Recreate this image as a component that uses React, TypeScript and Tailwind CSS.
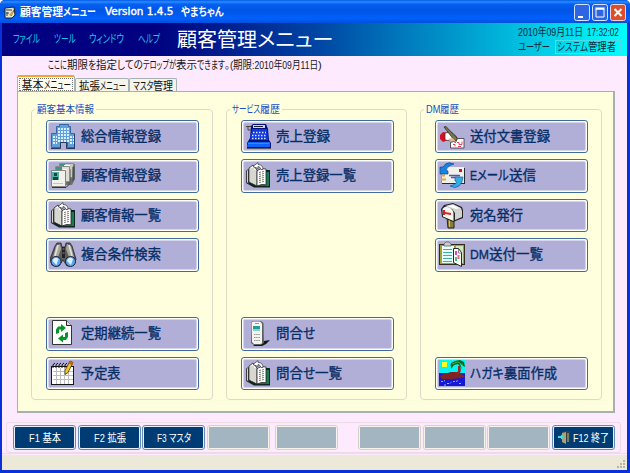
import { useLayoutEffect, useRef, useState, type ReactNode } from "react";

/* Text run squeezed or stretched horizontally to a fixed advance width. */
function T({ w, children, className = "" }: { w: number; children: string; className?: string }) {
  const ref = useRef<HTMLSpanElement>(null);
  const [scale, setScale] = useState(1);
  useLayoutEffect(() => {
    if (ref.current) setScale(w / ref.current.offsetWidth);
  }, [w, children]);
  return (
    <span className={`inline-block shrink-0 whitespace-pre ${className}`} style={{ width: w }}>
      <span ref={ref} className="inline-block origin-left [font-feature-settings:'palt']" style={{ transform: `scaleX(${scale})` }}>
        {children}
      </span>
    </span>
  );
}

function Icon({ children }: { children: ReactNode }) {
  return (
    <svg width="27" height="27" viewBox="0 0 27 27" className="shrink-0">
      {children}
    </svg>
  );
}

const Building = () => (
  <Icon>
    <path d="M1.500 10.500h5v-7h3v-2h9v2h2v7h4v14h-7v-5h-7v5h-9z" fill="#5f9fdc" stroke="#3667a0" />
    <path d="M8 5.500h11M8 8.500h11M8 11.500h11M8 14.500h11M3 13.500h4M3 16.500h4M3 19.500h4M20 13.500h4M20 16.500h4M20 19.500h4M8 17.500h11" stroke="#d9efff" strokeWidth="2" strokeDasharray="2 1" shapeRendering="crispEdges" />
    <path d="M1 25.500h9.500v-6h6v6H25" fill="none" stroke="#2b3a55" />
    <path d="M24.500 11v14" stroke="#26406c" />
  </Icon>
);

const Cards = () => (
  <Icon>
    <path d="M10 2h15v15l-3 6h-6z" fill="#6e716e" />
    <path d="M9.500 1.500h14l-1 14h-13z" fill="#c9cbc4" stroke="#8b8b84" />
    <path d="M10 2h5v4h-5z" fill="#39978a" />
    <path d="M22.500 5l2-1v13l-2 3zM18.500 9l2-2v13l-2 3z" fill="#4d504d" />
    <path d="M5.500 4.500h14v15h-14z" fill="#deded6" stroke="#8b8b84" />
    <path d="M6 5h6v4H6z" fill="#39978a" />
    <path d="M14 3.500h6M13 7.500h4" stroke="#fff" />
    <path d="M1.500 8.500h14v16h-14z" fill="#f1f1e9" stroke="#85857e" />
    <path d="M2 10h7v8H2z" fill="#58aca0" />
    <path d="M4 11h3v3H4zM3 15h5v3H3z" fill="#0e4b47" />
    <path d="M3 21.500h10" stroke="#c4c4bd" />
    <path d="M2 25.500h14l3-3" fill="none" stroke="#333" />
  </Icon>
);

const Book = () => (
  <Icon>
    <path d="M19 8h6v17.500H9L1 21V9z" fill="#10271f" />
    <path d="M21 10h3v14H11v-1h10z" fill="#1b7a52" />
    <path d="M1.500 8.500l2-1v14l-2-1z" fill="#d5d5cf" stroke="#222" strokeWidth=".7" />
    <path d="M4 6l4-3 4 5v16l-8-4z" fill="#f4f4ee" stroke="#222" strokeWidth=".8" />
    <path d="M12 9c2-2 5-3 9-2v16c-4-1-6 0-9 1z" fill="#fff" stroke="#222" strokeWidth=".8" />
    <path d="M14 10.500l5-1M14 12.500l5-1M14 14.500l5-1M14 16.500l5-1M14 18.500l5-1M14 20.500l5-1" stroke="#77776f" strokeDasharray="2 1" />
    <path d="M6 6v14M8 6v15M10 8v14" stroke="#bbbab2" />
    <path d="M8 4.500l5-4v2q5 0 5 5h-2q-1-3-3-3v2z" fill="#fff" stroke="#333" strokeWidth=".7" />
  </Icon>
);

const Binoculars = () => (
  <Icon>
    <path d="M5 5l2-3h4l1 4h3l1-4h4l2 3 4 13-2 6-7 1-4-6-4 6-7-1-2-6z" fill="#5d5c5a" stroke="#28282c" strokeWidth=".8" />
    <path d="M6 5l4-2 1 5-3 8-5 0zM17 3l4 2 3 11-5 0-3-8z" fill="#a9a8a0" />
    <path d="M8 4L5 15M19 4l3 11" stroke="#e6e5da" strokeWidth="1.500" fill="none" />
    <path d="M12 6h3v11h-3z" fill="#222" />
    <path d="M12.500 8h2M12.500 12h2" stroke="#8c8b85" />
    <circle cx="6" cy="20.500" r="5" fill="#5ba5ec" stroke="#1c2236" />
    <circle cx="20.500" cy="20.500" r="5" fill="#5ba5ec" stroke="#1c2236" />
    <path d="M2.500 20c1-4 4-4 6-2l-2 6zM17 20c1-4 4-4 6-2l-2 6z" fill="#d8f1ff" />
  </Icon>
);

const Recycle = () => (
  <Icon>
    <path d="M2.500.5h14l5 5v19h-19z" fill="#fff" stroke="#333" />
    <path d="M16.500.5v5h5" fill="#ddd" stroke="#222" />
    <path d="M6 14V9.500l2-3h3V4l5 4-5 4V9.500H9V13z" fill="#079326" />
    <path d="M18 12v5l-2 3h-3v2.500l-5-4 5-4V17h2v-4z" fill="#079326" />
  </Icon>
);

const Calendar = () => (
  <Icon>
    <path d="M1 6h23v19H1z" fill="#171717" />
    <path d="M2 7h21v17H2z" fill="#fff" />
    <path d="M3 11.500h20M3 15.500h20M3 19.500h20M6.500 8v16M10.500 8v16M14.500 8v16M18.500 8v16" stroke="#bdbdbd" />
    <path d="M5 3Q2 4 3 8M8 3Q5 4 6 8M11 3Q8 4 9 8M14 3q-3 1-2 5M17 3q-3 1-2 5" stroke="#111" fill="none" />
    <path d="M20 1l3 1.500-5 10-3 2v-4z" fill="#f5c62c" stroke="#463600" strokeWidth=".8" />
    <path d="M20 1l3 1.500-1 3-3-2z" fill="#b8681f" />
  </Icon>
);

const Register = () => (
  <Icon>
    <path d="M6 3l2-2h13l2 5 1 11 2 3v6H2v-6l3-5z" fill="#04107f" />
    <path d="M8 2h12v3H8z" fill="#c8d4f0" />
    <path d="M9 3.500h9" stroke="#222" />
    <path d="M7 6h15l1 11H5z" fill="#1239de" />
    <path d="M8 9.500h13M7 12.500h15M7 15.500h15" stroke="#d4eaff" strokeWidth="1.500" strokeDasharray="1.500 1.500" />
    <path d="M3 19h22v5H2z" fill="#0d63fb" />
    <path d="M3 18.500h21" stroke="#051384" />
    <path d="M3 20.500h21" stroke="#2d92ff" />
    <path d="M1 3.500h5M3 4v3h3" stroke="#444" fill="none" />
    <path d="M2 25.500h24" stroke="#555466" />
  </Icon>
);

const Phone = () => (
  <Icon>
    <path d="M16 20l3 1 6-1-4 4-4 2H8z" fill="#171717" />
    <path d="M6 2l3-1h7l2.500 2 .5 20-3 2H9l-3-2z" fill="#5d6260" />
    <path d="M6.500 2.500l2-1H15l2 2v20L15 24H9l-2-2z" fill="#f4f4ed" />
    <path d="M8 6h7v5H8z" fill="#279b96" />
    <path d="M8 9h7v2H8z" fill="#86d5cc" />
    <path d="M9 14.500h6M9 17.500h6M9 20.500h6" stroke="#909392" strokeDasharray="1.500 .7" />
    <path d="M10 3.500h4" stroke="#999" />
  </Icon>
);

const Writing = () => (
  <Icon>
    <path d="M1 12l3-3 5 1 0 7-5 2-3-3z" fill="#d81120" />
    <path d="M6 10l6-1 5 4 2 4-3 3-4-2-6-1z" fill="#fff" stroke="#282525" strokeWidth=".7" />
    <path d="M5 4l2-.5L18 15v3l-3-1z" fill="#77774b" stroke="#222" strokeWidth=".7" />
    <path d="M9 16l5-1 3 4-3 2z" fill="#e3b39a" />
    <path d="M11.500 19.500l3-1 2 1 2-4 6.500 0v9.500h-13.500z" fill="#fff" stroke="#333" strokeWidth=".8" />
    <path d="M14 21.500h2v2M18 19.500h2v2h3v-3M19 23.500h3" stroke="#de465b" fill="none" />
  </Icon>
);

const Mail = () => (
  <Icon>
    <path d="M3 6h23v16H3z" fill="#282a30" />
    <path d="M2 5h23v16H2z" fill="#f1f1eb" />
    <path d="M2.500 5v16" stroke="#cf951f" />
    <path d="M20 7h3v3h-3z" fill="#e80b16" />
    <path d="M2 13.500h4M2 17.500h5" stroke="#e0a83a" strokeWidth="2" />
    <path d="M10 13.500h11M12 15.500h9" stroke="#4c57bb" strokeWidth="1.500" />
    <path d="M15 2Q10-.5 6.500 2L4 5H1v7h8V9L7 8q2-5 8-6z" fill="#1584e0" stroke="#053c91" strokeWidth=".6" />
    <path d="M11 24q5 3 9 0l3-4 1-5h-8v4l2 1q-2 3-7 4z" fill="#2fb0e4" stroke="#064e97" strokeWidth=".6" />
  </Icon>
);

const Mailbox = () => (
  <Icon>
    <path d="M8 16h7v10H9z" fill="#8a7d33" stroke="#252413" />
    <path d="M10.500 18v7" stroke="#d2c569" />
    <path d="M2 7l3-4 9-2 9 4 1 3v8l-10 4L3 15z" fill="#222" />
    <path d="M6 4l8-2 8 4 1 3v6l-7 3v-7l-3-4z" fill="#d3d4d0" />
    <path d="M3.500 7q2-3 5-2 5 1 6 6v8L4 14.500z" fill="#f6f6ef" />
    <path d="M8 4l6-1 7 3-4 1z" fill="#fff" />
    <path d="M4 8h2v5H4zm2 2l6 1v2l-6-1z" fill="#d7222b" />
  </Icon>
);

const Clipboard = () => (
  <Icon>
    <path d="M0 3h26v21H0z" fill="#302d1b" />
    <path d="M1 4h24v19H1z" fill="#a3a02e" />
    <path d="M3 5h12v17H3z" fill="#eafff7" />
    <path d="M4 8.500h9M4 11.500h9M4 14.500h9M4 17.500h9M4 20.500h9" stroke="#3bb2a5" />
    <path d="M5 3l2-2h3l2 2v2H5z" fill="#ccc" stroke="#555" strokeWidth=".7" />
    <path d="M17 5h7v17h-7z" fill="#d5e6bf" />
    <path d="M14.500 7.500l5 0 3 4v14l-8-4z" fill="#fff" stroke="#292929" />
    <path d="M19.500 8v4h3" fill="none" stroke="#555" strokeWidth=".7" />
    <path d="M16 10h2v4h-2z" fill="#de43c6" />
    <path d="M16 16h2v4h-2z" fill="#47c669" />
    <path d="M18.500 14h2v4h-2z" fill="#e56a7c" />
  </Icon>
);

const Island = () => (
  <Icon>
    <path d="M0 0h26v13H0z" fill="#06f4f6" />
    <path d="M0 13h26v13H0z" fill="#1519d5" />
    <path d="M3 2h5v5H3z" fill="#faff25" />
    <path d="M1 16l4-2 7-2h7l5 3 2 2-4 1-9 1H3z" fill="#812323" />
    <path d="M19 6h2l1 4-1 3-3 2 1-5z" fill="#972d22" />
    <path d="M11 7l1-4 4-2 5-1 4 2 1 5-3-2-2-1 2 5-4-5-4 1-3 4v-4z" fill="#0b6529" />
    <path d="M13 4l6-2 5 3" stroke="#4eae2a" fill="none" />
    <path d="M2 21.500h2l2-1M8 23.500h3l1-1M14 21.500h3l2-1M20 23.500h3M5 25h3" stroke="#89b4fa" fill="none" strokeDasharray="2 1" />
  </Icon>
);

type Item = { icon: ReactNode; label: ReactNode };

function MenuButton({ icon, label }: Item) {
  return (
    <button className="flex h-[33.5px] w-[153px] items-center rounded-[3px] border border-[#3f6c9c] bg-[#fffffa] p-px">
      <span className="flex h-full w-full items-center rounded-[2px] border border-[#d8d6e6] bg-[#b1aed8] pl-px">
        {icon}
        <span className="ml-[4px] flex pt-px text-[13.5px] leading-[20px] whitespace-nowrap text-[#062e66] [-webkit-text-stroke:0.35px_#062e66]">
          {label}
        </span>
      </span>
    </button>
  );
}

function Group({ title, top, bottom, className }: { title: ReactNode; top: Item[]; bottom: Item[]; className: string }) {
  return (
    <fieldset className={`h-[299px] min-w-0 ${className}`}>
      <div className="grid h-full">
        <div className="col-start-1 row-start-1 mt-[8px] rounded-[4px] border border-[#dcdcc6]" />
        <div className="col-start-1 row-start-1 flex flex-col">
          <legend className="ml-[4px] flex h-[17px] w-fit items-center bg-[#ffffdd] px-[2px] text-[10.500px] leading-[17px] text-[#1450c4]">{title}</legend>
          <div className="ml-[15px] flex grow flex-col gap-[6px] pt-[1.500px]">
            {top.map((it, i) => <MenuButton key={i} {...it} />)}
            <div className="mt-auto flex flex-col gap-[6px] pb-[10px]">
              {bottom.map((it, i) => <MenuButton key={i} {...it} />)}
            </div>
          </div>
        </div>
      </div>
    </fieldset>
  );
}

function FnKey({ children, className = "" }: { children?: ReactNode; className?: string }) {
  return children ? (
    <button className={`flex h-[25px] w-[63px] shrink-0 items-center justify-center rounded-[3px] border border-[#6489b5] bg-[#e8f2fa] p-px ${className}`}>
      <span className="flex h-full w-full items-center justify-center rounded-[1px] bg-[#003c74] text-[11px] leading-[16px] text-white">{children}</span>
    </button>
  ) : (
    <div className={`h-[25px] w-[63px] shrink-0 rounded-[3px] border border-[#d9d0c9] bg-[#f5f4ea] p-px ${className}`}>
      <div className="h-full w-full bg-[#a2b5c1]" />
    </div>
  );
}

export default function App() {
  return (
    <div className="flex h-[473px] w-[630px] flex-col overflow-hidden rounded-t-[5px] bg-[#0831d9] font-['Liberation_Sans','Noto_Sans_CJK_JP',sans-serif]">
      <header className="flex h-[23px] shrink-0 items-center bg-[linear-gradient(180deg,#0058e6_0%,#2a8cff_8%,#0560f2_18%,#0055e5_45%,#0060fb_80%,#0050dd_100%)] pt-px pl-[4px] text-[11px] leading-[20px] font-bold text-white">
        <svg width="12" height="13" viewBox="0 0 12 13" className="mr-[4px]">
          <path d="M1 2l9-1 1 8-3 3H1z" fill="#e7e7d5" stroke="#18202e" />
          <path d="M2 4h6M2 7h3M7 10l3-6M3 10V6" stroke="#30443e" />
          <path d="M5 9l3-4 2 1-3 4z" fill="#cda845" />
        </svg>
        <T w={43}>顧客管理</T>
        <T w={33}>メニュー</T>
        <span className="ml-[9px] font-['DejaVu_Sans'] font-normal [-webkit-text-stroke:0.4px_white]"><T w={68} className="text-[10px]">Version 1.4.5</T></span>
        <T w={43} className="ml-[8px]">やまちゃん</T>
        <div className="mr-[4px] ml-auto flex gap-[2px]">
          <svg width="16" height="17" viewBox="0 0 16 17">
            <rect x=".5" y=".5" width="15" height="16" rx="2" fill="#2e65e2" stroke="#d6e3ff" />
            <path d="M4 12h5v2H4z" fill="#fff" />
          </svg>
          <svg width="16" height="17" viewBox="0 0 16 17">
            <rect x=".5" y=".5" width="15" height="16" rx="2" fill="#2e65e2" stroke="#d6e3ff" />
            <path d="M4 5h8v8H4z" fill="none" stroke="#fff" />
            <path d="M3.500 4.500h9" stroke="#fff" strokeWidth="2" />
          </svg>
          <svg width="16" height="17" viewBox="0 0 16 17">
            <rect x=".5" y=".5" width="15" height="16" rx="2" fill="#dc4f2c" stroke="#f5d5d5" />
            <path d="M4.500 5l7 7M11.500 5l-7 7" stroke="#fff" strokeWidth="2" />
          </svg>
        </div>
      </header>

      <div className="mr-[3px] ml-[2px] flex h-[447px] shrink-0 flex-col bg-[#fdeafe]">
        <div className="flex h-[33px] shrink-0 items-center bg-[linear-gradient(90deg,#000080_0%,#000080_24%,#0044a2_50%,#00ffff_100%)]">
          <nav className="ml-[11px] flex pb-px text-[11.500px] leading-[16px] text-[#17c9f5]">
            <T w={27}>ファイル</T>
            <T w={22} className="ml-[14px]">ツール</T>
            <T w={35} className="ml-[13px]">ウィンドウ</T>
            <T w={22} className="ml-[14px]">ヘルプ</T>
          </nav>
          <h1 className="ml-[17px] flex text-[20px] leading-[30px] text-white">
            <T w={80}>顧客管理</T>
            <T w={77}>メニュー</T>
          </h1>
          <div className="mr-[5px] ml-auto w-[106px] pb-px text-[11px] leading-[14px] text-[#082b3d]">
            <div className="flex h-[15px] items-center pl-[2px]">
              <T w={65}>2010年09月11日</T>
              <T w={32} className="ml-[4px]">17:32:02</T>
            </div>
            <div className="flex items-center pl-[2px]">
              <T w={32}>ユーザー</T>
              <span className="ml-[5px] flex h-[14px] w-[66px] items-center border border-[#4cdbe7] pl-px">
                <T w={31}>システム</T>
                <T w={28}>管理者</T>
              </span>
            </div>
          </div>
        </div>

        <div className="flex h-[19px] shrink-0 items-center pb-px pl-[46px] text-[11px] leading-[16px] text-[#161616]">
          <T w={19}>ここに</T>
          <T w={21}>期限</T>
          <T w={8}>を</T>
          <T w={21}>指定</T>
          <T w={26}>しての</T>
          <T w={33}>テロップが</T>
          <T w={21}>表示</T>
          <T w={28}>できます</T>
          <T w={8}>。(</T>
          <T w={19}>期限</T>
          <T w={66}>:2010年09月11日</T>
          <T w={4}>)</T>
        </div>

        <div className="z-10 flex h-[16px] shrink-0 items-end pl-[15px] text-[11px] leading-[14px] text-[#111]">
          <div className="flex h-[16px] w-[58px] items-center rounded-t-[2px] border-x border-t-2 border-x-[#aab4b6] border-t-[#f0a52b] bg-[#fdfcf0] px-px pt-px">
            <span className="flex h-full w-full items-center justify-center border border-dotted border-[#777] leading-[10px]">
              <T w={22}>基本</T>
              <T w={27}>メニュー</T>
            </span>
          </div>
          <div className="flex h-[13px] w-[54px] items-center justify-center rounded-t-[2px] border-x border-t border-[#a5b1b3] bg-[#f5f4ea] pt-px">
            <T w={21}>拡張</T>
            <T w={26}>メニュー</T>
          </div>
          <div className="flex h-[13px] w-[48px] items-center justify-center rounded-t-[2px] border-x border-t border-[#a5b1b3] bg-[#f5f4ea] pt-px">
            <T w={20}>マスタ</T>
            <T w={20}>管理</T>
          </div>
        </div>

        <main className="ml-[15px] flex h-[322px] w-[598px] shrink-0 border border-r-2 border-b-2 border-[#a6afb3] bg-[#ffffdd] pt-[9px] pl-[13px]">
          <Group
            className="w-[182px]"
            title={<T w={57}>顧客基本情報</T>}
            top={[
              { icon: <Building />, label: <T w={80}>総合情報登録</T> },
              { icon: <Cards />, label: <T w={80}>顧客情報登録</T> },
              { icon: <Book />, label: <T w={80}>顧客情報一覧</T> },
              { icon: <Binoculars />, label: <T w={80}>複合条件検索</T> },
            ]}
            bottom={[
              { icon: <Recycle />, label: <T w={80}>定期継続一覧</T> },
              { icon: <Calendar />, label: <T w={40}>予定表</T> },
            ]}
          />
          <Group
            className="ml-[13px] w-[181px]"
            title={<><T w={28}>サービス</T><T w={20}>履歴</T></>}
            top={[
              { icon: <Register />, label: <T w={54}>売上登録</T> },
              { icon: <Book />, label: <T w={80}>売上登録一覧</T> },
            ]}
            bottom={[
              { icon: <Phone />, label: <><T w={27}>問合</T><T w={12}>せ</T></> },
              { icon: <Book />, label: <><T w={27}>問合</T><T w={12}>せ</T><T w={27}>一覧</T></> },
            ]}
          />
          <Group
            className="ml-[13px] w-[182px]"
            title={<><T w={14}>DM</T><T w={19}>履歴</T></>}
            top={[
              { icon: <Writing />, label: <T w={80}>送付文書登録</T> },
              { icon: <Mail />, label: <><T w={7}>E</T><T w={32}>メール</T><T w={27}>送信</T></> },
              { icon: <Mailbox />, label: <T w={53}>宛名発行</T> },
              { icon: <Clipboard />, label: <><T w={19}>DM</T><T w={54}>送付一覧</T></> },
            ]}
            bottom={[{ icon: <Island />, label: <><T w={34}>ハガキ</T><T w={53}>裏面作成</T></> }]}
          />
        </main>

        <div className="mt-[9px] ml-[4px] flex h-[31px] w-[615px] shrink-0 items-center rounded-[3px] border border-[#eadbe5] pl-[6px]">
          <FnKey><T w={32}>F1 基本</T></FnKey>
          <FnKey className="ml-[2px]"><T w={32}>F2 拡張</T></FnKey>
          <FnKey className="ml-px"><T w={34}>F3 マスタ</T></FnKey>
          <FnKey className="ml-[2px]" />
          <FnKey className="ml-[5px]" />
          <FnKey className="ml-[20px]" />
          <FnKey className="ml-[2px]" />
          <FnKey className="ml-px" />
          <FnKey className="ml-[2px]">
            <svg width="12" height="13" viewBox="0 0 12 13" className="mr-[3px]">
              <path d="M4 1l3-1h5v11H8l-4 1z" fill="#383e39" />
              <path d="M4 2l4-1v12l-4-2z" fill="#a1a481" />
              <path d="M9 2h2v9H9z" fill="#777d65" />
              <path d="M0 6h4" stroke="#34dfe6" strokeWidth="2" />
              <path d="M3 3.500l3 2.500-3 2.500" fill="#34dfe6" />
            </svg>
            <T w={36}>F12 終了</T>
          </FnKey>
        </div>
        <footer className="flex grow items-end justify-end border-t border-[#eadfdc] bg-[#ece9d8] bg-clip-content pt-px">
          <svg width="12" height="12" viewBox="0 0 12 12">
            <path d="M8 2h2v2H8zM8 5h2v2H8zM5 5h2v2H5zM8 8h2v2H8zM5 8h2v2H5zM2 8h2v2H2z" fill="#b9b5a3" />
          </svg>
        </footer>
      </div>
    </div>
  );
}
